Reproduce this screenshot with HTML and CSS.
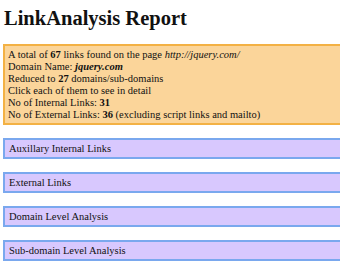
FILE: index.html
```html
<!DOCTYPE html>
<html>
<head>
<meta charset="utf-8">
<link rel="stylesheet" href="styles.css">
</head>
<body>
<h1 class="title">LinkAnalysis Report</h1>
<div class="summary">
  <div>A total of <b>67</b> links found on the page <i>http://jquery.com/</i></div>
  <div>Domain Name: <b><i>jquery.com</i></b></div>
  <div>Reduced to <b>27</b> domains/sub-domains</div>
  <div>Click each of them to see in detail</div>
  <div>No of Internal Links: <b>31</b></div>
  <div>No of External Links: <b>36</b> (excluding script links and mailto)</div>
</div>
<div class="sections">
  <div class="section">Auxillary Internal Links</div>
  <div class="section">External Links</div>
  <div class="section">Domain Level Analysis</div>
  <div class="section">Sub-domain Level Analysis</div>
</div>
</body>
</html>
```
FILE: styles.css
```css
html, body {
  margin: 0;
  padding: 0;
  background: #ffffff;
}
body {
  font-family: "Liberation Serif", "Times New Roman", serif;
  color: #111;
  font-size: 10.5px;
  line-height: 12px;
  padding: 0 0 0 3px;
  overflow: hidden;
}
.title {
  font-size: 20.5px;
  line-height: 24px;
  font-weight: bold;
  margin: 6px 0 0 1px;
  height: 38px;
}
.summary {
  background: #fbd59a;
  border: 2px solid #f3b144;
  border-right: none;
  padding: 3px 0 2px 3px;
}
.sections {
  display: flex;
  flex-direction: column;
  gap: 13px;
  margin-top: 13px;
}
.section {
  background: #d8c8fe;
  border: 2px solid #7aa8ee;
  border-right: none;
  height: 17px;
  line-height: 17px;
  padding-left: 4px;
}
```
